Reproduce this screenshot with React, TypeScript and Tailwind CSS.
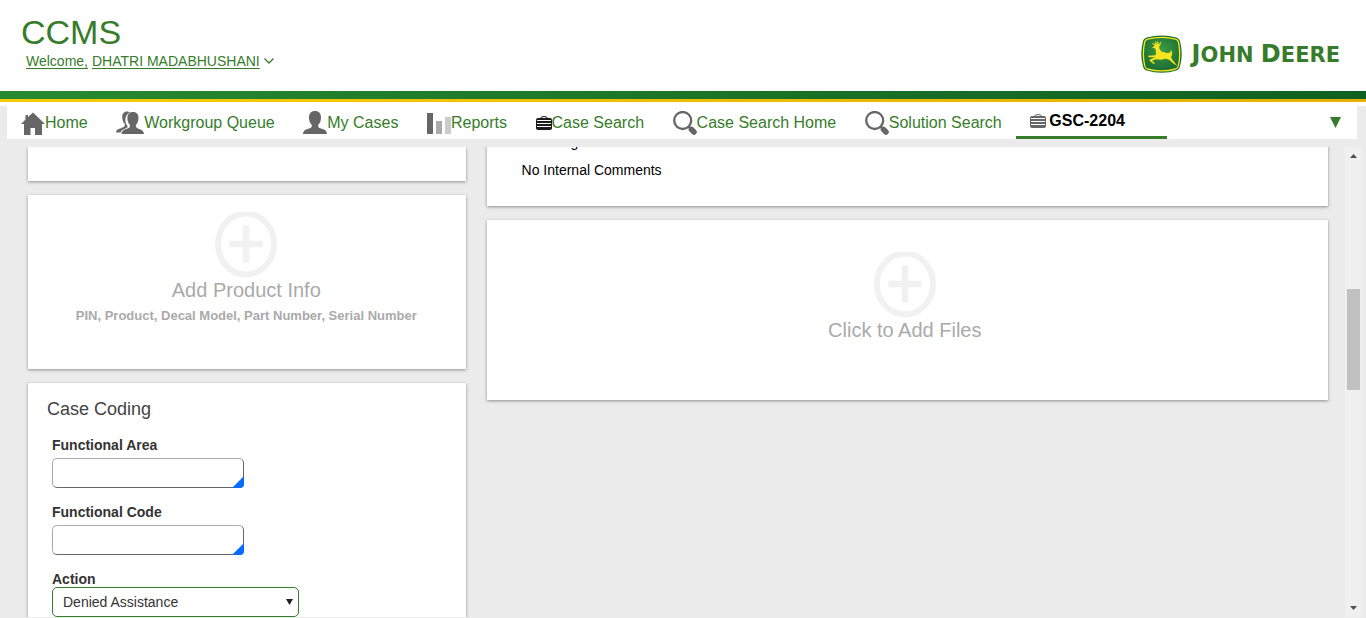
import React from "react";

const HomeIcon = () => (
  <svg width="24" height="24" viewBox="0 0 24 24" fill="#666" aria-hidden="true">
    <path d="M12 1.500 24 13H21V24H14V17H9.500V24H3V13H0L4.500 8.500V4H7V6Z" />
  </svg>
);

const PeopleIcon = () => (
  <svg width="28" height="24" viewBox="0 0 28 24" fill="#666" aria-hidden="true">
    <path d="M14 1.200C11-.5 6.200.8 6.200 5.500c0 3 .8 5.500 2.600 7.500.3 2-.5 3-3.300 4C2 18.300.5 18.500 0 21.500h4.500c.7-2.300 2.800-3.300 6-4.500 1.500-.8 1.200-1.800.2-3.200C8.500 10.500 8.500 4 14 1.200Z" />
    <path d="M17 1c3.800 0 5.600 2.600 5.500 6 0 3-1 5.300-2.600 7-.3 2 .3 3 2.600 3.700 3.500 1.200 5 1.800 5.500 5.300H5.500c.4-3.500 2-4.100 5.500-5.300 2.600-.8 3.200-1.700 2.900-3.700-1.500-1.600-2.500-4-2.500-7C11.400 3.500 13.200 1 17 1Z" />
  </svg>
);

const PersonIcon = () => (
  <svg width="24" height="24" viewBox="0 0 24 24" fill="#666" aria-hidden="true">
    <path d="M12 0c4 0 6.100 2.700 6 6.500 0 3.200-1 5.600-2.800 7.500-.3 2 .4 2.900 2.800 3.600 3.600 1.100 5.700 1.900 6 5.400H0c.3-3.500 2.400-4.300 6-5.400 2.500-.7 3.100-1.600 2.800-3.600C7 12.100 6 9.700 6 6.500 5.900 2.700 8 0 12 0Z" />
  </svg>
);

const ReportIcon = () => (
  <svg width="24" height="24" viewBox="0 0 24 24" aria-hidden="true">
    <rect x="0" y="2" width="6" height="21" fill="#666" />
    <rect x="9" y="10" width="6" height="13" fill="#aaa" />
    <rect x="18" y="6" width="6" height="17" fill="#ccc" />
  </svg>
);

const CaseIcon = ({ color }: { color: string }) => (
  <svg width="16" height="16" viewBox="0 0 16 16" aria-hidden="true">
    <path d="M4.500 3.500Q4.500 1.500 8 1.500T11.500 3.500" fill="none" stroke={color} strokeWidth="1" />
    <path d="M2 3h12q2 0 2 2v8q0 2-2 2H2q-2 0-2-2V5q0-2 2-2Z" fill={color} />
    <path d="M1 5.500h14M1 8.500h14M1 11.500h14" stroke="#fff" strokeWidth="1" />
  </svg>
);

const SearchIcon = () => (
  <svg width="24" height="24" viewBox="0 0 24 24" fill="none" stroke="#666" aria-hidden="true">
    <circle cx="9.700" cy="9.500" r="8.500" strokeWidth="2.300" />
    <path d="M15.500 15.500 18 18" strokeWidth="2.500" />
    <path d="m18.500 18.500 2.500 2.500" strokeWidth="5.500" strokeLinecap="round" />
  </svg>
);

const PlusCircle = () => (
  <svg width="62" height="66" viewBox="0 0 62 66" aria-hidden="true">
    <ellipse cx="31" cy="32" rx="28" ry="30.500" fill="none" stroke="#f1f1f1" strokeWidth="6" />
    <path d="M14.500 32H47.500M31 13.500V50.500" stroke="#f1f1f1" strokeWidth="6.500" />
  </svg>
);

const DeerMark = () => (
  <svg className="shrink-0" width="42" height="38" viewBox="0 0 42 38" aria-hidden="true">
    <defs>
      <radialGradient id="shield" cx="50%" cy="38%" r="60%">
        <stop offset="0" stopColor="#3f9b45" />
        <stop offset="1" stopColor="#1a6f32" />
      </radialGradient>
    </defs>
    <path d="M5.500 2.500Q21-1.500 35.500 2.500 38.500 3.500 39 6 42.500 19 39 31.500 38.500 34.500 35.500 35.500 21 40 5.500 35.500 2.500 34.500 2 31.500-1.500 19 2 6 2.500 3.500 5.500 2.500Z" fill="#1c7034" />
    <path d="M6.500 4.200Q21 .6 34.500 4.200 37 5 37.400 7 40 19 37.400 30.500 37 33.200 34.500 34 21 37.800 6.500 34 4.100 33.200 3.700 30.500 1 19 3.700 7 4.100 5 6.500 4.200Z" fill="url(#shield)" stroke="#f7e51d" strokeWidth="1.300" />
    <path d="M11 12.300 14 10.800 12.500 9.800 11 7.800 13.500 8.800 15 9.500 13.700 6 15.500 7.300 16.500 9.500 16.300 5.500 17.600 7.500 17.800 9.700 20 6.200 19.700 9.300 18.200 11.500 18.500 14 20.500 16.500 26 18 29.500 17.500 29.300 15 31 16.500 31.200 19.500 30 22.300 31.500 25 36.500 31 32 28.200 28.500 25 25 23.800 20 24.800 15 24.300 11 25.800 13.800 28.300 13 29.300 8.500 25.800 9.500 24.300 14.500 22.300 7.800 22.300 7 20.700 14.500 20.300 15 18.500 14.500 13.800Z" fill="#f7e51d" />
  </svg>
);

const tabs = [
  { label: "Home", icon: <HomeIcon /> },
  { label: "Workgroup Queue", icon: <PeopleIcon /> },
  { label: "My Cases", icon: <PersonIcon /> },
  { label: "Reports", icon: <ReportIcon /> },
  { label: "Case Search", icon: <CaseIcon color="#1a1a1a" /> },
  { label: "Case Search Home", icon: <SearchIcon /> },
  { label: "Solution Search", icon: <SearchIcon /> },
];

const cardClass = "bg-white shadow-[0_1px_3px_rgba(0,0,0,0.4)]";

function LookupField({ id, label }: { id: string; label: string }) {
  return (
    <div className="mb-3 flex flex-col">
      <label htmlFor={id} className="h-[25px] font-bold leading-6">{label}</label>
      <div className="relative w-48">
        <input
          id={id}
          type="text"
          className="block h-[30px] w-full rounded-[5px] border border-[#666] border-t-[#aaa] border-l-[#aaa] bg-white px-2 outline-none"
        />
        <svg className="absolute right-0 bottom-0" width="12" height="12" viewBox="0 0 12 12" aria-hidden="true">
          <path d="M12 0V8Q12 12 8 12H0Z" fill="#0a6cff" />
        </svg>
      </div>
    </div>
  );
}

export default function App() {
  return (
    <div className="flex h-screen flex-col overflow-hidden bg-[#ebebeb] font-['Liberation_Sans',Arial,sans-serif] text-sm text-[#333]">
      <header className="flex shrink-0 items-end justify-between bg-white pt-3 pr-[26px] pb-[18px] pl-[21px] text-[#367c2b]">
        <div className="pb-[3px]">
          <h1 className="text-[34px] leading-10">CCMS</h1>
          <button type="button" className="ml-[5px] flex items-center leading-[18px]">
            <span className="underline underline-offset-2">Welcome,</span>
            <span className="ml-1 underline underline-offset-2">DHATRI MADABHUSHANI</span>
            <svg className="ml-1" width="10" height="6" viewBox="0 0 10 6" fill="none" stroke="#367c2b" strokeWidth="1.300" aria-hidden="true">
              <path d="M.5.500 5 5 9.500.500" />
            </svg>
          </button>
        </div>
        <div className="flex items-center gap-[9px]">
          <DeerMark />
          <span className="font-['DejaVu_Sans',sans-serif] text-[21px] leading-7 font-bold whitespace-nowrap">
            <span className="text-2xl leading-7">J</span>OHN <span className="text-2xl leading-7">D</span>EERE
          </span>
        </div>
      </header>
      <div className="h-2 shrink-0 bg-linear-to-r from-[#278a30] to-[#0f6022]" />
      <div className="h-[3px] shrink-0 bg-linear-to-r from-[#f5cc00] to-[#e6b000]" />
      <div className="h-1 shrink-0 bg-white" />

      <nav className="mr-[9px] ml-[7px] flex h-[33px] shrink-0 items-stretch bg-white text-base text-[#367c2b]">
        <div className="flex max-w-[1160px] flex-1 justify-between">
          {tabs.map((tab) => (
            <a key={tab.label} href="#" className="flex items-center px-[14px] pt-px whitespace-nowrap">
              {tab.icon}
              {tab.label}
            </a>
          ))}
          <a href="#" className="flex items-center gap-[3px] border-b-[3px] border-[#367c2b] pr-[42px] pl-[14px] font-bold whitespace-nowrap text-black">
            <CaseIcon color="#666" />
            GSC-2204
          </a>
        </div>
        <button type="button" aria-label="More tabs" className="mr-4 ml-auto">
          <svg width="11" height="11" viewBox="0 0 11 11" fill="#367c2b" aria-hidden="true">
            <path d="M0 0H11L5.500 11Z" />
          </svg>
        </button>
      </nav>

      <div className="flex min-h-0 flex-1 pt-2 pb-px">
        <main className="grid min-w-0 flex-1 grid-cols-[13fr_25fr] gap-[21px] overflow-hidden pr-[17px] pl-7">
          <div className="flex flex-col gap-[14px]">
            <section className={`${cardClass} h-[34px] shrink-0`} />
            <section className={`${cardClass} h-[174px] shrink-0`}>
              <button type="button" className="flex w-full flex-col items-center pt-[17px] pr-px text-[#aaa]">
                <PlusCircle />
                <span className="text-xl leading-6">Add Product Info</span>
                <span className="mt-1 text-[13px] leading-5 font-bold">PIN, Product, Decal Model, Part Number, Serial Number</span>
              </button>
            </section>
            <section className={`${cardClass} shrink-0 px-[19px] pt-3`}>
              <h2 className="mb-[10px] text-lg leading-7 text-[#444]">Case Coding</h2>
              <div className="pl-[5px]">
                <LookupField id="functional-area" label="Functional Area" />
                <LookupField id="functional-code" label="Functional Code" />
                <div className="flex flex-col pb-6">
                  <label htmlFor="action" className="pt-1 font-bold leading-4">Action</label>
                  <div className="relative w-[247px]">
                    <select id="action" className="block h-[30px] w-full appearance-none rounded-[5px] border border-[#367c2b] bg-white pl-[10px] outline-none">
                      <option>Denied Assistance</option>
                    </select>
                    <svg className="pointer-events-none absolute top-3 right-[6px]" width="7" height="6" viewBox="0 0 7 6" fill="#222" aria-hidden="true">
                      <path d="M0 0H7L3.500 6Z" />
                    </svg>
                  </div>
                </div>
              </div>
            </section>
          </div>

          <div className="flex flex-col gap-[14px]">
            <section className={`${cardClass} -mt-[22px] shrink-0 px-[35px] pt-[3px] pb-7 text-black`}>
              <h3 className="mb-[5px] leading-[29px]">Incoming</h3>
              <p className="leading-4">No Internal Comments</p>
            </section>
            <section className={`${cardClass} h-[180px] shrink-0`}>
              <button type="button" className="flex w-full flex-col items-center pt-8 pr-[5px] text-[#aaa]">
                <PlusCircle />
                <span className="text-xl leading-6">Click to Add Files</span>
              </button>
            </section>
          </div>
        </main>
        <div className="mr-1 flex w-[17px] shrink-0 flex-col items-center bg-[#f0f0f0] py-[7px]">
          <svg width="7" height="4" viewBox="0 0 7 4" fill="#505050" aria-hidden="true">
            <path d="M0 4H7L3.500 0Z" />
          </svg>
          <div className="mt-[131px] h-[101px] w-[13px] bg-[#c1c1c1]" />
          <svg className="mt-auto" width="7" height="4" viewBox="0 0 7 4" fill="#505050" aria-hidden="true">
            <path d="M0 0H7L3.500 4Z" />
          </svg>
        </div>
      </div>
    </div>
  );
}
